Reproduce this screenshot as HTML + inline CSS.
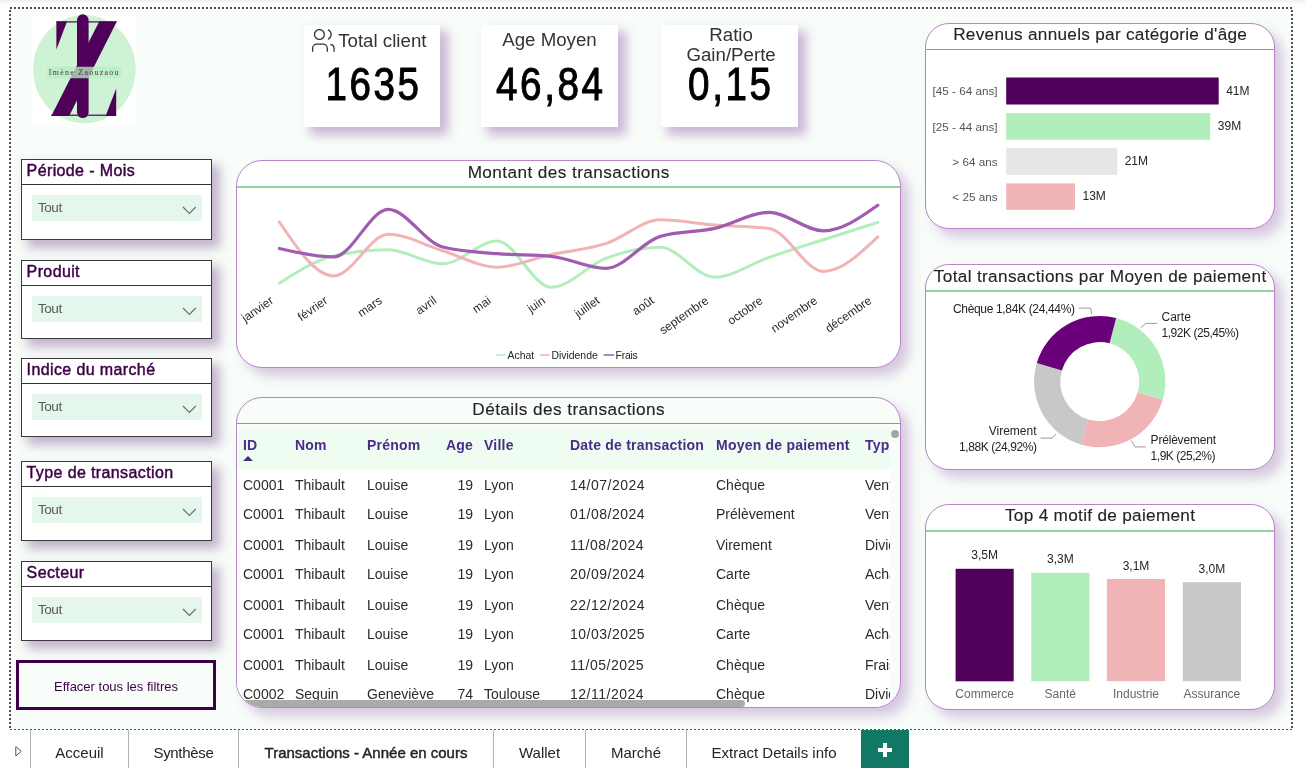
<!DOCTYPE html>
<html lang="fr">
<head>
<meta charset="utf-8">
<title>Transactions - Année en cours</title>
<style>
*{box-sizing:border-box;margin:0;padding:0}
html,body{width:1305px;height:768px;overflow:hidden;background:#fff;font-family:"Liberation Sans","DejaVu Sans",sans-serif;color:#252423}
#topshade{position:absolute;left:0;top:0;width:1305px;height:5px;background:linear-gradient(#efefef,#fff)}
#canvas{position:absolute;left:9px;top:7px;width:1284px;height:724px;background:#f8fdf9}
#dots{position:absolute;left:9px;top:7px;width:1284px;height:724px;pointer-events:none}
.abs{position:absolute}
/* slicers */
.slicer{position:absolute;left:21px;width:191px;background:#fff;border:1px solid #3a3a3a;box-shadow:7px 7px 10px 1px rgba(115,70,135,.40)}
.slicer .hd{height:25px;border-bottom:1px solid #333;font-size:16px;line-height:22px;padding-left:4.6px;color:#3d0046;letter-spacing:.38px;white-space:nowrap;-webkit-text-stroke:.45px #3d0046}
.slicer .dd{position:absolute;left:10px;top:35px;width:170px;height:26px;background:#e5f6ec;font-size:13.6px;line-height:26px;padding-left:6px;color:#595959;letter-spacing:-.5px}
.slicer .dd svg{position:absolute;left:150px;top:11px}
/* cards */
.card{position:absolute;top:25px;width:137px;height:102.3px;background:#fff;box-shadow:7px 7px 10px 1px rgba(140,80,165,.42)}
.card .t{position:absolute;left:0;width:100%;text-align:center;font-size:18.7px;color:#333;line-height:20px;white-space:nowrap}
.card .v{position:absolute;left:0;width:100%;top:34px;padding-left:3px;text-align:center;font-size:46px;line-height:50px;color:#000;letter-spacing:3px;transform:scaleX(.84);-webkit-text-stroke:1px #000}
/* visuals */
.vis{position:absolute;background:#fff;border:1px solid #b985c8;border-radius:26px;box-shadow:8px 8px 12px rgba(150,100,175,.34)}
.vis .ttl{position:absolute;left:0;top:0;width:100%;text-align:center;font-size:17.2px;line-height:20px;color:#252423;white-space:nowrap;letter-spacing:.35px;-webkit-text-stroke:.12px #252423}
.vis .gl{position:absolute;left:0;width:100%;height:2px;background:#8fd3a0}
.th{position:absolute;top:36.5px;font-size:14px;font-weight:bold;color:#4b2c8a;line-height:20px;white-space:nowrap;letter-spacing:.22px}
.td{position:absolute;font-size:14px;color:#2b2b2b;line-height:20px;white-space:nowrap}
/* tabs */
#tabs{position:absolute;left:0;top:730px;width:1305px;height:38px;background:#fff}
.tab{position:absolute;top:0;height:38px;border-left:1px solid #b0b0b0;font-size:15px;line-height:45px;text-align:center;color:#252423;white-space:nowrap}
</style>
</head>
<body>
<div id="wrap" style="position:absolute;left:0;top:0;width:1305px;height:768px;will-change:transform">
<div id="topshade"></div>
<div id="canvas"></div>

<!-- LOGO -->
<div class="abs" id="logo" style="left:32px;top:13.5px;width:104px;height:110px;background:#fff;overflow:hidden"><svg class="abs" style="left:0;top:0" width="104" height="110" viewBox="32 14 104 110">
<ellipse cx="84.4" cy="69.3" rx="51.3" ry="54.2" fill="#cdf3d4"/>
<g fill="#4f0058">
<rect x="56.4" y="21.3" width="60.2" height="1.2"/>
<rect x="51.3" y="114.6" width="64.9" height="1.2"/>
<polygon points="56.4,21.5 67.0,21.5 56.4,49.4"/>
<polygon points="99.2,21.6 116.8,21.6 69.1,115.9 51.3,115.9"/>
<polygon points="116.2,88.6 116.2,115.9 105.6,115.9"/>
<rect x="77" y="14.3" width="11.6" height="103.8" rx="5.8"/>
</g>
<rect x="47" y="66.8" width="74.2" height="11.4" rx="4" fill="#b3eec0" fill-opacity=".78"/>
<text x="84.3" y="74.9" font-family="'Liberation Serif','DejaVu Serif',serif" font-size="7.9" letter-spacing="1.3" fill="#5a2a66" text-anchor="middle">Imène Zaouzaou</text>
</svg></div>

<!-- SLICERS -->
<div class="slicer" style="top:159px;height:81px"><div class="hd">Période - Mois</div><div class="dd">Tout<svg width="15" height="9" viewBox="0 0 15 9"><path d="M1 1 L7.4 7.4 L13.8 1" fill="none" stroke="#6a6a6a" stroke-width="1.1"/></svg></div></div>
<div class="slicer" style="top:260px;height:79px"><div class="hd">Produit</div><div class="dd">Tout<svg width="15" height="9" viewBox="0 0 15 9"><path d="M1 1 L7.4 7.4 L13.8 1" fill="none" stroke="#6a6a6a" stroke-width="1.1"/></svg></div></div>
<div class="slicer" style="top:358px;height:79px"><div class="hd">Indice du marché</div><div class="dd">Tout<svg width="15" height="9" viewBox="0 0 15 9"><path d="M1 1 L7.4 7.4 L13.8 1" fill="none" stroke="#6a6a6a" stroke-width="1.1"/></svg></div></div>
<div class="slicer" style="top:461px;height:80px"><div class="hd">Type de transaction</div><div class="dd">Tout<svg width="15" height="9" viewBox="0 0 15 9"><path d="M1 1 L7.4 7.4 L13.8 1" fill="none" stroke="#6a6a6a" stroke-width="1.1"/></svg></div></div>
<div class="slicer" style="top:561px;height:80px"><div class="hd">Secteur</div><div class="dd">Tout<svg width="15" height="9" viewBox="0 0 15 9"><path d="M1 1 L7.4 7.4 L13.8 1" fill="none" stroke="#6a6a6a" stroke-width="1.1"/></svg></div></div>

<!-- BUTTON -->
<div class="abs" id="btn" style="left:16px;top:660px;width:200px;height:50px;border:3px solid #3d0046;background:#f8fdf9;text-align:center;font-size:13px;line-height:47px;color:#3d0046">Effacer tous les filtres</div>

<!-- CARDS -->
<div class="card" style="left:303.5px;width:136.6px"><svg class="abs" style="left:7px;top:4px" width="26" height="26" viewBox="310 29 26 26" fill="none" stroke="#333" stroke-width="1.3" stroke-linecap="butt">
<circle cx="318.4" cy="34.5" r="4.9"/>
<path d="M326.9 29.9 A4.9 4.9 0 0 1 326.9 39.1"/>
<path d="M311.6 51.8 V48.4 a4.2 4.2 0 0 1 4.2 -4.2 h6.3 a4.2 4.2 0 0 1 4.2 4.2 V51.8"/>
<path d="M329.4 44.3 a4.4 4.4 0 0 1 3.7 4.4 V51.8"/>
</svg><div class="t" style="top:5.5px;left:0;width:auto;padding-left:34.7px;text-align:left">Total client</div><div class="v">1635</div></div>
<div class="card" style="left:481px"><div class="t" style="top:5.4px">Age Moyen</div><div class="v">46,84</div></div>
<div class="card" style="left:661px"><div class="t" style="top:-.3px;padding-left:3.2px">Ratio<br>Gain/Perte</div><div class="v">0,15</div></div>

<!-- LINE CHART -->
<div class="vis" id="linevis" style="left:236px;top:160px;width:665px;height:208px"><div class="ttl" style="top:.8px;letter-spacing:.42px;padding-left:.4px">Montant des transactions</div><div class="gl" style="top:25px"></div><svg class="abs" style="left:0;top:0" width="663" height="206" viewBox="0 0 663 206">
<g fill="none" stroke-linecap="round" stroke-linejoin="round">
<path stroke="#b2eebc" stroke-width="3" d="M42.4 122.2 C60.5 110.6 78.7 99.0 96.8 94.9 C114.9 90.8 133.1 88.8 151.2 88.8 C169.3 88.8 187.5 102.8 205.6 102.8 C223.7 102.8 241.9 80.1 260.0 80.1 C278.1 80.1 296.3 126.3 314.4 126.3 C332.5 126.3 350.7 104.0 368.8 97.3 C386.9 90.6 405.1 86.3 423.2 86.3 C441.3 86.3 459.5 116.2 477.6 116.2 C495.7 116.2 513.9 102.6 532.0 96.4 C550.1 90.1 568.3 84.5 586.4 78.7 C604.5 72.9 622.7 67.1 640.8 61.4"/>
<path stroke="#f0b3b6" stroke-width="3" d="M42.4 61.0 C60.5 88.0 78.7 115.0 96.8 115.0 C114.9 115.0 133.1 73.3 151.2 73.3 C169.3 73.3 187.5 84.2 205.6 89.7 C223.7 95.2 241.9 106.2 260.0 106.2 C278.1 106.2 296.3 97.4 314.4 93.5 C332.5 89.6 350.7 88.4 368.8 82.6 C386.9 76.8 405.1 58.8 423.2 58.8 C441.3 58.8 459.5 62.6 477.6 64.0 C495.7 65.4 513.9 65.1 532.0 67.4 C550.1 69.7 568.3 110.4 586.4 110.4 C604.5 110.4 622.7 93.1 640.8 75.9"/>
<path stroke="#a05cb0" stroke-width="3.2" d="M42.4 87.5 C60.5 91.7 78.7 95.9 96.8 95.9 C114.9 95.9 133.1 48.4 151.2 48.4 C169.3 48.4 187.5 81.5 205.6 86.0 C223.7 90.5 241.9 91.1 260.0 92.7 C278.1 94.2 296.3 93.6 314.4 95.3 C332.5 97.0 350.7 107.4 368.8 107.4 C386.9 107.4 405.1 80.7 423.2 75.4 C441.3 70.1 459.5 71.4 477.6 67.4 C495.7 63.4 513.9 51.3 532.0 51.3 C550.1 51.3 568.3 69.8 586.4 69.8 C604.5 69.8 622.7 57.0 640.8 44.2"/>
</g>
<g font-size="12" fill="#2b2b2b"><text transform="translate(37.2,141.3) rotate(-35)" text-anchor="end">janvier</text><text transform="translate(91.6,141.3) rotate(-35)" text-anchor="end">février</text><text transform="translate(146.0,141.3) rotate(-35)" text-anchor="end">mars</text><text transform="translate(200.4,141.3) rotate(-35)" text-anchor="end">avril</text><text transform="translate(254.8,141.3) rotate(-35)" text-anchor="end">mai</text><text transform="translate(309.2,141.3) rotate(-35)" text-anchor="end">juin</text><text transform="translate(363.6,141.3) rotate(-35)" text-anchor="end">juillet</text><text transform="translate(418.0,141.3) rotate(-35)" text-anchor="end">août</text><text transform="translate(472.4,141.3) rotate(-35)" text-anchor="end">septembre</text><text transform="translate(526.8,141.3) rotate(-35)" text-anchor="end">octobre</text><text transform="translate(581.2,141.3) rotate(-35)" text-anchor="end">novembre</text><text transform="translate(635.6,141.3) rotate(-35)" text-anchor="end">décembre</text></g>
<g font-size="10.4" fill="#252423">
<line x1="258.6" y1="194" x2="268.3" y2="194" stroke="#b2eebc" stroke-width="1.5"/><text x="270.5" y="197.5">Achat</text>
<line x1="302.8" y1="194" x2="312.6" y2="194" stroke="#f0b3b6" stroke-width="1.5"/><text x="314.5" y="197.5">Dividende</text>
<line x1="366.6" y1="194" x2="377.2" y2="194" stroke="#a05cb0" stroke-width="1.5"/><text x="378.5" y="197.5" letter-spacing="-.2">Frais</text>
</g>
</svg></div>

<!-- TABLE -->
<div class="vis" id="tablevis" style="left:236px;top:397px;width:665px;height:311px;background:#f8fdf9;overflow:hidden"><div class="ttl" style="top:.5px;letter-spacing:.43px;padding-left:.4px">Détails des transactions</div><div class="gl" style="top:25px;height:1px;background:#5cbb70"></div><div class="abs" id="tbl" style="left:0;top:0;width:653px;height:309px;overflow:hidden"><div class="abs" style="left:0;top:31px;width:653px;height:40px;background:#effcf1"></div><div class="abs" style="left:0;top:71px;width:653px;height:238px;background:#fff"></div><div class="th" style="left:6px">ID</div><div class="th" style="left:58px">Nom</div><div class="th" style="left:130px">Prénom</div><div class="th" style="left:176px;width:60px;text-align:right">Age</div><div class="th" style="left:247px">Ville</div><div class="th" style="left:333px">Date de transaction</div><div class="th" style="left:479px">Moyen de paiement</div><div class="th" style="left:628px">Type de transaction</div><svg class="abs" style="left:6px;top:58px" width="10" height="5"><path d="M0 5 L5 0 L10 5 Z" fill="#4b2c8a"/></svg><div class="td" style="left:6px;top:77px">C0001</div><div class="td" style="left:58px;top:77px">Thibault</div><div class="td" style="left:130px;top:77px">Louise</div><div class="td" style="left:176px;top:77px;width:60px;text-align:right">19</div><div class="td" style="left:247px;top:77px">Lyon</div><div class="td" style="left:333px;top:77px;letter-spacing:.5px">14/07/2024</div><div class="td" style="left:479px;top:77px">Chèque</div><div class="td" style="left:628px;top:77px">Vente</div><div class="td" style="left:6px;top:106px">C0001</div><div class="td" style="left:58px;top:106px">Thibault</div><div class="td" style="left:130px;top:106px">Louise</div><div class="td" style="left:176px;top:106px;width:60px;text-align:right">19</div><div class="td" style="left:247px;top:106px">Lyon</div><div class="td" style="left:333px;top:106px;letter-spacing:.5px">01/08/2024</div><div class="td" style="left:479px;top:106px" letter-spacing="-.2">Prélèvement</div><div class="td" style="left:628px;top:106px">Vente</div><div class="td" style="left:6px;top:137px">C0001</div><div class="td" style="left:58px;top:137px">Thibault</div><div class="td" style="left:130px;top:137px">Louise</div><div class="td" style="left:176px;top:137px;width:60px;text-align:right">19</div><div class="td" style="left:247px;top:137px">Lyon</div><div class="td" style="left:333px;top:137px;letter-spacing:.5px">11/08/2024</div><div class="td" style="left:479px;top:137px">Virement</div><div class="td" style="left:628px;top:137px">Dividende</div><div class="td" style="left:6px;top:166px">C0001</div><div class="td" style="left:58px;top:166px">Thibault</div><div class="td" style="left:130px;top:166px">Louise</div><div class="td" style="left:176px;top:166px;width:60px;text-align:right">19</div><div class="td" style="left:247px;top:166px">Lyon</div><div class="td" style="left:333px;top:166px;letter-spacing:.5px">20/09/2024</div><div class="td" style="left:479px;top:166px">Carte</div><div class="td" style="left:628px;top:166px">Achat</div><div class="td" style="left:6px;top:197px">C0001</div><div class="td" style="left:58px;top:197px">Thibault</div><div class="td" style="left:130px;top:197px">Louise</div><div class="td" style="left:176px;top:197px;width:60px;text-align:right">19</div><div class="td" style="left:247px;top:197px">Lyon</div><div class="td" style="left:333px;top:197px;letter-spacing:.5px">22/12/2024</div><div class="td" style="left:479px;top:197px">Chèque</div><div class="td" style="left:628px;top:197px">Vente</div><div class="td" style="left:6px;top:226px">C0001</div><div class="td" style="left:58px;top:226px">Thibault</div><div class="td" style="left:130px;top:226px">Louise</div><div class="td" style="left:176px;top:226px;width:60px;text-align:right">19</div><div class="td" style="left:247px;top:226px">Lyon</div><div class="td" style="left:333px;top:226px;letter-spacing:.5px">10/03/2025</div><div class="td" style="left:479px;top:226px">Carte</div><div class="td" style="left:628px;top:226px">Achat</div><div class="td" style="left:6px;top:257px">C0001</div><div class="td" style="left:58px;top:257px">Thibault</div><div class="td" style="left:130px;top:257px">Louise</div><div class="td" style="left:176px;top:257px;width:60px;text-align:right">19</div><div class="td" style="left:247px;top:257px">Lyon</div><div class="td" style="left:333px;top:257px;letter-spacing:.5px">11/05/2025</div><div class="td" style="left:479px;top:257px">Chèque</div><div class="td" style="left:628px;top:257px">Frais</div><div class="td" style="left:6px;top:286px">C0002</div><div class="td" style="left:58px;top:286px">Seguin</div><div class="td" style="left:130px;top:286px">Geneviève</div><div class="td" style="left:176px;top:286px;width:60px;text-align:right">74</div><div class="td" style="left:247px;top:286px">Toulouse</div><div class="td" style="left:333px;top:286px;letter-spacing:.5px">12/11/2024</div><div class="td" style="left:479px;top:286px">Chèque</div><div class="td" style="left:628px;top:286px">Dividende</div></div><div class="abs" style="left:-6px;top:302px;width:514px;height:7px;border-radius:4px;background:#a9aba8"></div><div class="abs" style="left:653.5px;top:32px;width:8px;height:8px;border-radius:4px;background:#a6a6a6"></div></div>

<!-- RIGHT CHARTS -->
<div class="vis" id="barvis" style="border-radius:24px;left:925px;top:23px;width:350px;height:206px"><div class="ttl" style="top:-.2px;letter-spacing:.28px;padding-left:.3px">Revenus annuels par catégorie d'âge</div><div class="gl" style="top:25px;height:1px;background:#5cbb70"></div><svg class="abs" style="left:0;top:0" width="348" height="204" viewBox="0 0 348 204"><rect x="80.2" y="53.5" width="212.5" height="27" fill="#4f0058"/><text x="71.5" y="71.4" font-size="11.7" fill="#555" text-anchor="end">[45 - 64 ans]</text><text x="300.2" y="70.8" font-size="12" fill="#252423">41M</text><rect x="80.2" y="89.0" width="204.0" height="26.8" fill="#b2eebc"/><text x="71.5" y="106.8" font-size="11.7" fill="#555" text-anchor="end">[25 - 44 ans]</text><text x="291.8" y="106.2" font-size="12" fill="#252423">39M</text><rect x="80.2" y="124.1" width="111.0" height="26.7" fill="#e6e6e6"/><text x="71.5" y="141.8" font-size="11.7" fill="#555" text-anchor="end">&gt; 64 ans</text><text x="198.7" y="141.2" font-size="12" fill="#252423">21M</text><rect x="80.2" y="159.4" width="68.8" height="26.4" fill="#f0b3b6"/><text x="71.5" y="177.0" font-size="11.7" fill="#555" text-anchor="end">&lt; 25 ans</text><text x="156.5" y="176.4" font-size="12" fill="#252423">13M</text></svg></div>
<div class="vis" id="donutvis" style="border-radius:24px;left:925px;top:264px;width:350px;height:206px"><div class="ttl" style="top:.8px;letter-spacing:.34px;padding-left:.3px">Total transactions par Moyen de paiement</div><div class="gl" style="top:25px"></div><svg class="abs" style="left:0;top:0" width="348" height="204" viewBox="0 0 348 204"><path d="M190.12 53.09 A65.6 65.6 0 0 1 236.73 134.79 L211.65 127.55 A39.5 39.5 0 0 0 183.59 78.36 Z" fill="#b2eebc"/><path d="M236.73 134.79 A65.6 65.6 0 0 1 154.74 179.40 L162.28 154.41 A39.5 39.5 0 0 0 211.65 127.55 Z" fill="#f0b3b6"/><path d="M154.74 179.40 A65.6 65.6 0 0 1 110.80 97.97 L135.83 105.38 A39.5 39.5 0 0 0 162.28 154.41 Z" fill="#c8c8c8"/><path d="M110.80 97.97 A65.6 65.6 0 0 1 190.12 53.09 L183.59 78.36 A39.5 39.5 0 0 0 135.83 105.38 Z" fill="#6b007b"/><polyline points="152.8,43.1 164.6,43.1 165.9,49.4" fill="none" stroke="#999" stroke-width="1"/><polyline points="230.9,58.4 219.9,58.4 214.6,63.1" fill="none" stroke="#999" stroke-width="1"/><polyline points="205.2,175.6 209.0,181.9 219.9,181.9" fill="none" stroke="#999" stroke-width="1"/><polyline points="130.2,168.8 126.2,173.1 114.6,173.1" fill="none" stroke="#999" stroke-width="1"/><g font-size="12" fill="#252423"><text x="27.0" y="48.0" letter-spacing="-.34">Chèque 1,84K (24,44%)</text><text x="235.5" y="56.3">Carte</text><text x="235.5" y="72.0" letter-spacing="-.45">1,92K (25,45%)</text><text x="224.6" y="179.0" letter-spacing="-.2">Prélèvement</text><text x="224.6" y="195.0" letter-spacing="-.47">1,9K (25,2%)</text><text x="110.5" y="170.0" text-anchor="end">Virement</text><text x="110.5" y="186.0" text-anchor="end" letter-spacing="-.42">1,88K (24,92%)</text></g></svg></div>
<div class="vis" id="colvis" style="border-radius:24px;left:925px;top:504px;width:350px;height:206px"><div class="ttl" style="top:.3px;letter-spacing:.30px;padding-left:.3px">Top 4 motif de paiement</div><div class="gl" style="top:25px"></div><svg class="abs" style="left:0;top:0" width="348" height="204" viewBox="0 0 348 204"><rect x="29.6" y="63.8" width="58.1" height="112.5" fill="#4f0058"/><text x="58.7" y="54.0" font-size="12" fill="#252423" text-anchor="middle">3,5M</text><text x="58.7" y="193.0" font-size="12" fill="#666" text-anchor="middle">Commerce</text><rect x="105.2" y="67.8" width="58.2" height="108.5" fill="#b2eebc"/><text x="134.3" y="58.0" font-size="12" fill="#252423" text-anchor="middle">3,3M</text><text x="134.3" y="193.0" font-size="12" fill="#666" text-anchor="middle">Santé</text><rect x="180.9" y="74.0" width="58.1" height="102.2" fill="#f0b3b6"/><text x="210.0" y="64.6" font-size="12" fill="#252423" text-anchor="middle">3,1M</text><text x="210.0" y="193.0" font-size="12" fill="#666" text-anchor="middle">Industrie</text><rect x="256.8" y="77.2" width="58.2" height="99.0" fill="#c8c8c8"/><text x="285.9" y="68.3" font-size="12" fill="#252423" text-anchor="middle">3,0M</text><text x="285.9" y="193.0" font-size="12" fill="#666" text-anchor="middle">Assurance</text></svg></div>

<!-- dotted frame -->
<svg id="dots" width="1284" height="724"><rect x="1" y="1" width="1282" height="722" fill="none" stroke="#505050" stroke-width="2" stroke-dasharray="2 2"/></svg>

<!-- TABS -->
<div id="tabs">
<svg class="abs" style="left:14px;top:15px" width="10" height="13" viewBox="0 0 10 13"><path d="M1.8 1.6 L7.2 6.3 L1.8 11 Z" fill="none" stroke="#555" stroke-width="1"/></svg>
<div class="tab" style="left:30px;width:98px">Acceuil</div>
<div class="tab" style="left:128px;width:110px;letter-spacing:-.3px">Synthèse</div>
<div class="tab" id="acttab" style="left:238px;width:255px;font-size:15px;-webkit-text-stroke:.45px #252423;letter-spacing:0">Transactions - Année en cours</div>
<div class="tab" style="left:493px;width:92px">Wallet</div>
<div class="tab" style="left:585px;width:101px">Marché</div>
<div class="tab" style="left:686px;width:175px">Extract Details info</div>
<div class="tab" style="left:861px;width:48px;background:#127866;border:none"><svg class="abs" style="left:17.3px;top:13.4px" width="14" height="14" viewBox="0 0 14 14"><path d="M5 0h4v5h5v4h-5v5h-4v-5h-5v-4h5z" fill="#fff"/></svg></div>
</div>
</div>
</body>
</html>
